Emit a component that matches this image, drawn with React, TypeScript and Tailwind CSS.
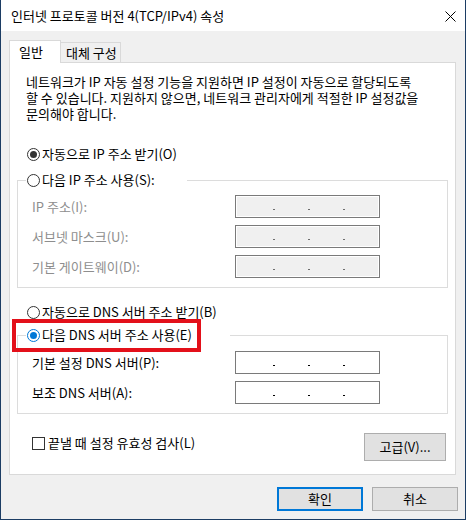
import React from 'react'

const font = "font-[family-name:'Noto_Sans_CJK_KR',sans-serif]"

function Radio({ checked = false, blue = false }: { checked?: boolean; blue?: boolean }) {
  return (
    <span
      className={`flex items-center justify-center w-[13px] h-[13px] rounded-full border bg-white shrink-0 ${
        blue ? 'border-[#0078d7]' : 'border-[#333333]'
      }`}
    >
      {checked && (
        <span className={`w-[7px] h-[7px] rounded-full ${blue ? 'bg-[#0078d7]' : 'bg-[#333333]'}`} />
      )}
    </span>
  )
}

function IpBox({ disabled = false }: { disabled?: boolean }) {
  const dot = disabled ? 'bg-[#6d6d6d]' : 'bg-[#000000]'
  return (
    <div
      className={`flex items-start w-[145px] h-[23px] border border-[#7a7a7a] shadow-[inset_0_0_0_1px_#ffffff] pt-[13px] ${
        disabled ? 'bg-[#f0f0f0]' : 'bg-white'
      }`}
    >
      <span className={`ml-[37px] w-[2px] h-[1px] ${dot}`} />
      <span className={`ml-[33px] w-[2px] h-[1px] ${dot}`} />
      <span className={`ml-[33px] w-[2px] h-[1px] ${dot}`} />
    </div>
  )
}

export default function App() {
  const ipRows = ['IP 주소(I):', '서브넷 마스크(U):', '기본 게이트웨이(D):']
  const dnsRows = ['기본 설정 DNS 서버(P):', '보조 DNS 서버(A):']

  return (
    <div className={`${font} text-[13px] leading-[16px] text-black bg-white w-[467px] h-[520px]`}>
      <div className="flex flex-col w-[466px] h-[520px] border-x border-b border-[#1c3d64] bg-[#f0f0f0]">
        {/* Title bar */}
        <div className="flex items-center justify-between h-[31px] bg-white pl-[10px] pr-[9px] shrink-0">
          <span className="whitespace-nowrap">인터넷 프로토콜 버전 4(TCP/IPv4) 속성</span>
          <svg width="11" height="11" viewBox="0 0 11 11" className="mt-[2px]">
            <path d="M0.5 0.5 L10.5 10.5 M10.5 0.5 L0.5 10.5" stroke="#000" strokeWidth="1" />
          </svg>
        </div>

        <div className="flex flex-col flex-1 pl-[8px] pt-[9px]">
          {/* Tabs */}
          <div className="flex items-end h-[22px]">
            <div className="relative z-10 w-[52px] h-[23px] -mb-px bg-white border-l border-t border-r border-[#d9d9d9] pl-[9px] pt-[3px]">
              일반
            </div>
            <div className="w-[60px] h-[20px] bg-[#f0f0f0] border-t border-r border-[#d9d9d9] pl-[5px] pt-[2px] whitespace-nowrap">
              대체 구성
            </div>
          </div>

          {/* Panel */}
          <div className="flex flex-col w-[447px] h-[413px] border border-[#d9d9d9] bg-white pt-[11px]">
            <p className="ml-[16px] whitespace-nowrap">
              네트워크가 IP 자동 설정 기능을 지원하면 IP 설정이 자동으로 할당되도록
              <br />할 수 있습니다. 지원하지 않으면, 네트워크 관리자에게 적절한 IP 설정값을
              <br />문의해야 합니다.
            </p>

            <div className="flex items-center gap-[2px] h-[16px] mt-[24px] ml-[17px]">
              <Radio checked />
              <span className="whitespace-nowrap">자동으로 IP 주소 받기(O)</span>
            </div>

            <fieldset className="mt-[10px] ml-[7px] w-[431px] border border-[#dcdcdc] pb-[9px]">
              <legend className="ml-[8px] w-[161px] pl-[1px]">
                <div className="flex items-center gap-[2px] h-[16px]">
                  <Radio />
                  <span className="whitespace-nowrap">다음 IP 주소 사용(S):</span>
                </div>
              </legend>
              <div className="grid grid-cols-[203px_145px] gap-y-[7px] pl-[14px] pt-[7px]">
                {ipRows.map((label) => (
                  <React.Fragment key={label}>
                    <div className="flex items-center h-[23px] text-[#8e8e8e] whitespace-nowrap">{label}</div>
                    <IpBox disabled />
                  </React.Fragment>
                ))}
              </div>
            </fieldset>

            <div className="flex items-center gap-[2px] h-[16px] mt-[16px] ml-[17px]">
              <Radio />
              <span className="whitespace-nowrap">자동으로 DNS 서버 주소 받기(B)</span>
            </div>

            <fieldset className="mt-[7px] ml-[7px] w-[431px] border border-[#dcdcdc] pb-[9px]">
              <legend className="relative ml-[8px] w-[204px] pl-[1px]">
                <div className="flex items-center gap-[2px] h-[16px]">
                  <Radio checked blue />
                  <span className="whitespace-nowrap">다음 DNS 서버 주소 사용(E)</span>
                </div>
                <div className="absolute -left-[14px] -top-[8px] w-[189px] h-[33px] border-4 border-[#e3101a]" />
              </legend>
              <div className="grid grid-cols-[203px_145px] gap-y-[7px] pl-[14px] pt-[8px]">
                {dnsRows.map((label) => (
                  <React.Fragment key={label}>
                    <div className="flex items-center h-[23px] whitespace-nowrap">{label}</div>
                    <IpBox />
                  </React.Fragment>
                ))}
              </div>
            </fieldset>

            <div className="flex items-start justify-between mt-auto mb-[13px] pl-[22px] pr-[9px]">
              <div className="flex items-center gap-[3px] h-[16px] mt-[2px]">
                <span className="w-[13px] h-[13px] border border-[#333333] bg-white" />
                <span className="whitespace-nowrap">끝낼 때 설정 유효성 검사(L)</span>
              </div>
              <button className="w-[82px] h-[28px] bg-[#e1e1e1] border border-[#adadad]">고급(V)...</button>
            </div>
          </div>

          {/* Footer buttons */}
          <div className="flex justify-end gap-[9px] mt-[12px] pr-[7px]">
            <button className="w-[86px] h-[24px] bg-[#e1e1e1] border-2 border-[#0078d7]">확인</button>
            <button className="w-[86px] h-[24px] bg-[#e1e1e1] border border-[#adadad]">취소</button>
          </div>
        </div>
      </div>
    </div>
  )
}
